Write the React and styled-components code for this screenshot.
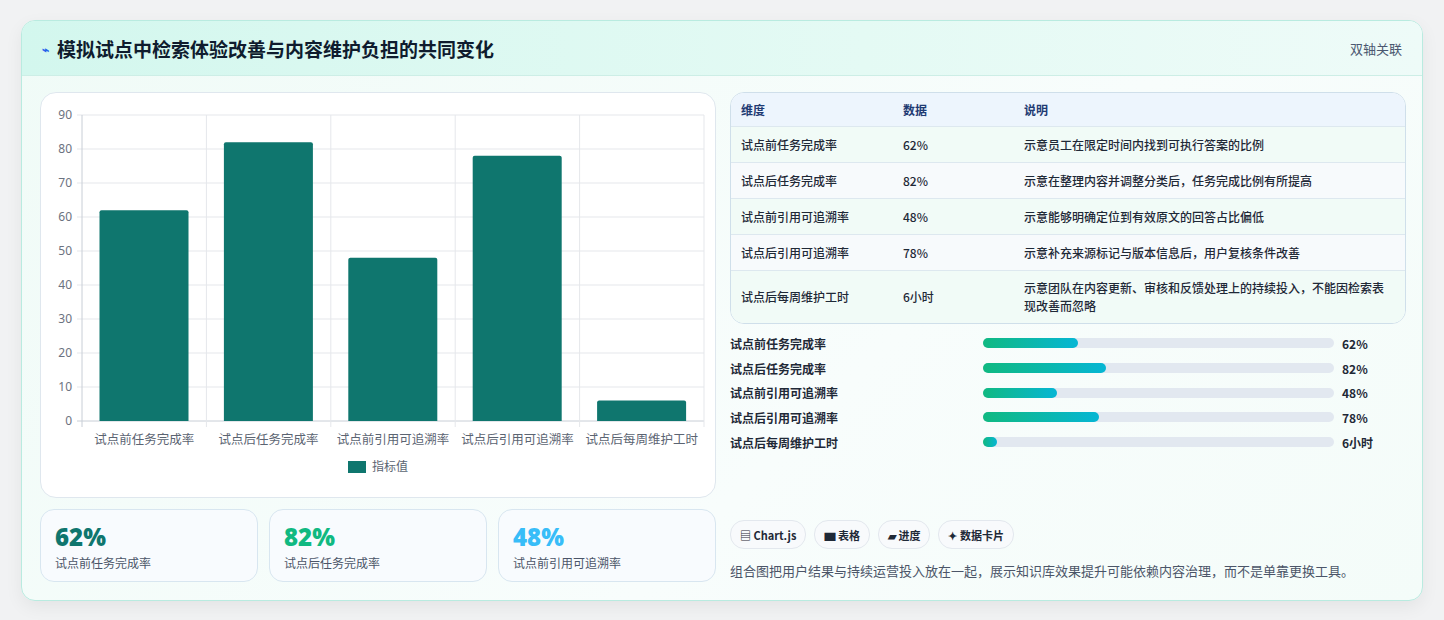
import React from "react";
import styled, { createGlobalStyle } from "styled-components";

const G = createGlobalStyle`
  body{margin:0;background:#f1f2f3;font-family:"Noto Sans CJK SC","Noto Sans",sans-serif;}
`;
const Page = styled.div`padding:20px 21px 21px 21px;`;
const Card = styled.div`
  border:1px solid #b9ebe0;border-radius:14px;overflow:hidden;
  background:linear-gradient(135deg,#f0fbf7,#f8fdfc 60%,#f4fcf9);
  box-shadow:0 6px 18px rgba(0,0,0,.06);
`;
const Header = styled.div`
  height:54px;display:flex;align-items:center;justify-content:space-between;
  padding:0 20px;background:linear-gradient(90deg,#d3f7ee,#e4faf4 60%,#eefbf8);
  border-bottom:1px solid #cdeee6;
`;
const Title = styled.h1`margin:0;font-size:19px;font-weight:700;color:#0f1c2e;display:flex;align-items:center;gap:8px;`;
const Tag = styled.span`font-size:13px;color:#4b5870;`;
const Body = styled.div`display:grid;grid-template-columns:676px 676px;gap:14px;padding:16px 18px 18px 18px;`;
const Col = styled.div`display:flex;flex-direction:column;`;
const Panel = styled.div`background:#fff;border:1px solid #dfe7ee;border-radius:16px;height:404px;`;
const Kpis = styled.div`display:grid;grid-template-columns:repeat(3,1fr);gap:11px;margin-top:11px;`;
const Kpi = styled.div`height:73px;box-sizing:border-box;border:1px solid #d8e6f0;border-radius:14px;background:#f8fbfe;padding:12px 14px;`;
const KV = styled.div`font-size:24px;font-weight:800;color:${p=>p.c};line-height:30px;font-family:"Open Sans","Noto Sans CJK SC",sans-serif;`;
const KL = styled.div`font-size:12px;color:#4b5568;margin-top:2px;`;
const Table = styled.div`border:1px solid #cfdfea;border-radius:14px;overflow:hidden;background:#fff;`;
const Row = styled.div`
  display:grid;grid-template-columns:162px 121px 1fr;padding:0 10px;align-items:center;
  min-height:${p=>p.h||35}px;font-size:12px;color:${p=>p.head?"#1f3b73":"#1f2937"};
  font-weight:${p=>p.head?600:500};
  background:${p=>p.head?"#edf5fd":p.alt?"#f7fafc":"#f1fbf7"};
  border-top:${p=>p.head?"none":"1px solid #dde8ef"};line-height:18px;
`;
const Bars = styled.div`display:flex;flex-direction:column;gap:6px;margin-top:10px;`;
const BarRow = styled.div`display:grid;grid-template-columns:253px 351px 1fr;gap:0;align-items:center;height:18.7px;font-size:12px;font-weight:600;color:#1f2937;`;
const Track = styled.div`height:10px;border-radius:5px;background:#e2e8f0;`;
const Fill = styled.div`height:100%;border-radius:5px;background:linear-gradient(90deg,#10b981,#06b6d4);`;
const Val = styled.span`padding-left:8px;font-weight:700;`;
const Chips = styled.div`display:flex;gap:8px;margin-top:auto;`;
const Chip = styled.span`height:27px;padding:0 9px;display:flex;align-items:center;border:1px solid #e3e8ee;border-radius:14px;background:#f8fafc;font-size:11px;font-weight:600;color:#1f2937;gap:3px;`;
const Note = styled.p`margin:12px 0 2px;font-size:13px;color:#4b5568;`;

const data=[["试点前任务完成率",62,"62%","示意员工在限定时间内找到可执行答案的比例"],["试点后任务完成率",82,"82%","示意在整理内容并调整分类后，任务完成比例有所提高"],["试点前引用可追溯率",48,"48%","示意能够明确定位到有效原文的回答占比偏低"],["试点后引用可追溯率",78,"78%","示意补充来源标记与版本信息后，用户复核条件改善"],["试点后每周维护工时",6,"6小时","示意团队在内容更新、审核和反馈处理上的持续投入，不能因检索表现改善而忽略"]];

function Chart(){
  const x0=41,x1=663,top=22,bot=328,w=(x1-x0)/5;
  const ys=[0,10,20,30,40,50,60,70,80,90];
  return <svg width="676" height="404" style={{display:"block"}}>
    {ys.map(v=>{const y=bot-(v/90)*(bot-top);return <g key={v}>
      <line x1={x0-5} x2={x1} y1={y} y2={y} stroke={v===0?"#c8ced6":"#e5e7eb"}/>
      <text x={x0-10} y={y+4} textAnchor="end" fontSize="12" fill="#6b7280" fontFamily="Noto Sans">{v}</text></g>})}
    {[0,1,2,3,4,5].map(i=><line key={i} x1={x0+i*w} x2={x0+i*w} y1={top} y2={bot+6} stroke={i===0?"#c8ced6":"#e5e7eb"}/>)}
    {data.map((d,i)=>{const h=(d[1]/90)*(bot-top);return <g key={i}>
      <path d={`M${x0+i*w+17.5} ${bot} V${bot-h+2} a2 2 0 0 1 2 -2 H${x0+i*w+104.5} a2 2 0 0 1 2 2 V${bot}Z`} fill="#0f766e"/>
      <text x={x0+i*w+w/2} y={bot+23} textAnchor="middle" fontSize="12.5" fill="#5b6472" fontFamily="Noto Sans CJK SC">{d[0]}</text></g>})}
    <rect x="307" y="368" width="18" height="12" fill="#0f766e"/>
    <text x="331" y="378" fontSize="12" fill="#5b6472" fontFamily="Noto Sans CJK SC">指标值</text>
  </svg>;
}

export default function App(){
  return <Page><G/><Card>
    <Header><Title><span style={{color:"#2563eb",fontSize:12}}>⌁</span>模拟试点中检索体验改善与内容维护负担的共同变化</Title><Tag>双轴关联</Tag></Header>
    <Body>
      <Col>
        <Panel><Chart/></Panel>
        <Kpis>
          <Kpi><KV c="#0f766e">62%</KV><KL>试点前任务完成率</KL></Kpi>
          <Kpi><KV c="#10b981">82%</KV><KL>试点后任务完成率</KL></Kpi>
          <Kpi><KV c="#38bdf8">48%</KV><KL>试点前引用可追溯率</KL></Kpi>
        </Kpis>
      </Col>
      <Col>
        <Table>
          <Row head h={33}><span>维度</span><span>数据</span><span>说明</span></Row>
          {data.map((d,i)=><Row key={i} alt={i%2===1} h={i===4?52:35}><span>{d[0]}</span><span>{d[2]}</span><span>{d[3]}</span></Row>)}
        </Table>
        <Bars>
          {data.map((d,i)=><BarRow key={i}><span>{d[0]}</span><Track><Fill style={{width:`${i===4?4:Math.round(d[1]*0.4+2)}%`}}/></Track><Val>{d[2]}</Val></BarRow>)}
        </Bars>
        <Chips><Chip>▤ Chart.js</Chip><Chip>▆ 表格</Chip><Chip>▰ 进度</Chip><Chip>✦ 数据卡片</Chip></Chips>
        <Note>组合图把用户结果与持续运营投入放在一起，展示知识库效果提升可能依赖内容治理，而不是单靠更换工具。</Note>
      </Col>
    </Body>
  </Card></Page>;
}
